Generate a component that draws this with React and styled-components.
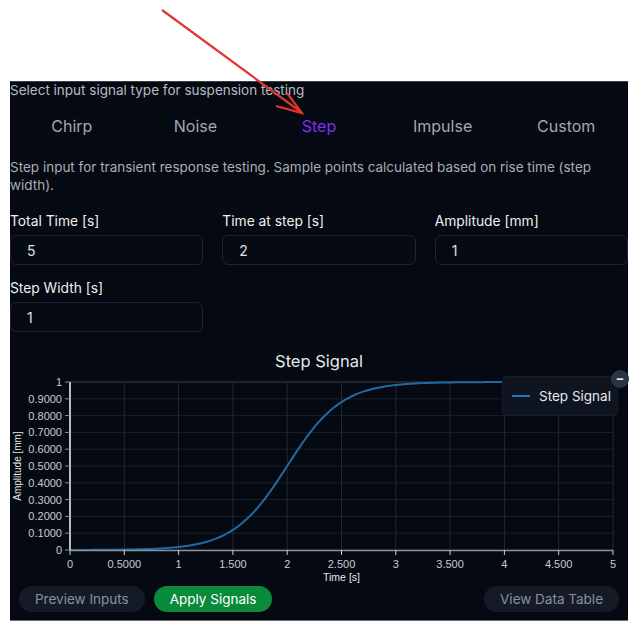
import React from 'react';
import styled, { createGlobalStyle } from 'styled-components';

const GlobalStyle = createGlobalStyle`
  html, body {
    margin: 0;
    padding: 0;
    background: #ffffff;
  }
  body {
    font-family: Inter, "Noto Sans", sans-serif;
  }
`;

const tabs = ['Chirp', 'Noise', 'Step', 'Impulse', 'Custom'];

const fields = [
  { label: 'Total Time [s]', value: '5' },
  { label: 'Time at step [s]', value: '2' },
  { label: 'Amplitude [mm]', value: '1' },
  { label: 'Step Width [s]', value: '1' },
];

// plot geometry (svg coords)
const PX0 = 60;
const PX1 = 603;
const PY0 = 34;
const PY1 = 202;
const sx = (t) => PX0 + (t / 5) * (PX1 - PX0);
const sy = (v) => PY1 - v * (PY1 - PY0);

const xTicks = [
  [0, '0'], [0.5, '0.5000'], [1, '1'], [1.5, '1.500'], [2, '2'], [2.5, '2.500'],
  [3, '3'], [3.5, '3.500'], [4, '4'], [4.5, '4.500'], [5, '5'],
];
const yTicks = [
  [0, '0'], [0.1, '0.1000'], [0.2, '0.2000'], [0.3, '0.3000'], [0.4, '0.4000'],
  [0.5, '0.5000'], [0.6, '0.6000'], [0.7, '0.7000'], [0.8, '0.8000'], [0.9, '0.9000'], [1, '1'],
];

const curvePath = (() => {
  const pts = [];
  for (let i = 0; i <= 200; i++) {
    const t = (i / 200) * 5;
    const v = 1 / (1 + Math.exp(-4 * (t - 2)));
    pts.push(`${i === 0 ? 'M' : 'L'}${sx(t).toFixed(2)},${sy(v).toFixed(2)}`);
  }
  return pts.join(' ');
})();

const App = () => {
  return (
    <>
      <GlobalStyle />
      <Page>
        <Arrow width="320" height="120" viewBox="0 0 320 120">
          <path d="M162 10 L301 112" stroke="#e3342f" strokeWidth="2.2" fill="none" />
          <path d="M276 106 L302 113 L287 93" stroke="#e3342f" strokeWidth="2.2" fill="none" strokeLinejoin="miter" />
        </Arrow>
        <Panel>
          <Intro>Select input signal type for suspension testing</Intro>
          <Tabs>
            {tabs.map((t) => (
              <Tab key={t} active={t === 'Step'}>{t}</Tab>
            ))}
          </Tabs>
          <Description>
            Step input for transient response testing. Sample points calculated based on rise time (step width).
          </Description>
          <FieldGrid>
            {fields.map((f) => (
              <Field key={f.label}>
                <Label>{f.label}</Label>
                <Input defaultValue={f.value} />
              </Field>
            ))}
          </FieldGrid>

          <ChartWrap>
            <svg width="618" height="236" viewBox="0 0 618 236">
              <text x="309" y="19" textAnchor="middle" fill="#e6e8eb" fontSize="16.5" fontFamily="Inter, sans-serif">
                Step Signal
              </text>
              {yTicks.map(([v]) => (
                <line key={'gy' + v} x1={PX0} x2={PX1} y1={sy(v)} y2={sy(v)}
                  stroke={v === 1 ? '#3a3f48' : '#1c212b'} strokeWidth="1" />
              ))}
              {xTicks.map(([t]) => (
                <line key={'gx' + t} x1={sx(t)} x2={sx(t)} y1={PY0} y2={PY1}
                  stroke="#232833" strokeWidth="1" />
              ))}
              <path d={curvePath} stroke="#1f6aa5" strokeWidth="2" fill="none" />
              <line x1={PX0} x2={PX1} y1={PY1 + 0.5} y2={PY1 + 0.5} stroke="#8c9099" strokeWidth="1.5" />
              <line x1={PX0} x2={PX0} y1={PY0} y2={PY1} stroke="#f2f2f2" strokeWidth="1.5" />
              {yTicks.map(([v, l]) => (
                <g key={'ty' + v}>
                  <line x1={PX0 - 5} x2={PX0} y1={sy(v)} y2={sy(v)} stroke="#8c9099" strokeWidth="1" />
                  <text x={PX0 - 8} y={sy(v) + 4} textAnchor="end" fill="#c9ccd1" fontSize="11"
                    fontFamily="'Liberation Sans', Arial, sans-serif">{l}</text>
                </g>
              ))}
              {xTicks.map(([t, l]) => (
                <g key={'tx' + t}>
                  <line x1={sx(t)} x2={sx(t)} y1={PY1} y2={PY1 + 5} stroke="#c9ccd1" strokeWidth="1" />
                  <text x={sx(t)} y={PY1 + 18} textAnchor="middle" fill="#c9ccd1" fontSize="11"
                    fontFamily="'Liberation Sans', Arial, sans-serif">{l}</text>
                </g>
              ))}
              <text x={(PX0 + PX1) / 2} y={PY1 + 31} textAnchor="middle" fill="#e6e8eb" fontSize="10.5"
                fontFamily="'Liberation Sans', Arial, sans-serif">Time [s]</text>
              <text transform={`translate(11 ${(PY0 + PY1) / 2}) rotate(-90)`} textAnchor="middle" fill="#e6e8eb"
                fontSize="10" fontFamily="'Liberation Sans', Arial, sans-serif">Amplitude [mm]</text>
            </svg>
            <Legend>
              <LegendLine />
              <span>Step Signal</span>
            </Legend>
            <Collapse>−</Collapse>
          </ChartWrap>

          <Actions>
            <Button>Preview Inputs</Button>
            <Button primary>Apply Signals</Button>
            <Spacer />
            <Button>View Data Table</Button>
          </Actions>
        </Panel>
      </Page>
    </>
  );
};

const Page = styled.div`
  position: relative;
  width: 638px;
  height: 631px;
  padding: 81px 10px 0 10px;
  box-sizing: border-box;
  background: #ffffff;
`;

const Arrow = styled.svg`
  position: absolute;
  left: 0;
  top: 0;
  z-index: 2;
  pointer-events: none;
`;

const Panel = styled.div`
  width: 618px;
  background: #050911;
  border-top: 1px solid #3b3f47;
  border-bottom: 1px solid #6c7078;
  padding-bottom: 8px;
  box-sizing: border-box;
  color: #b4b8bf;
`;

const Intro = styled.div`
  font-size: 13.5px;
  line-height: 17px;
  color: #b7bbc2;
`;

const Tabs = styled.div`
  display: grid;
  grid-template-columns: repeat(5, 1fr);
  height: 54px;
  align-items: center;
`;

const Tab = styled.div`
  text-align: center;
  font-size: 16px;
  color: ${(p) => (p.active ? '#7b2ff2' : '#a3a7ae')};
`;

const Description = styled.p`
  margin: 5px 0 0 0;
  font-size: 13.5px;
  line-height: 18px;
  color: #a9adb4;
`;

const FieldGrid = styled.div`
  display: grid;
  grid-template-columns: repeat(3, minmax(0, 1fr));
  column-gap: 19px;
  row-gap: 14px;
  margin-top: 18px;
`;

const Field = styled.div`
  display: flex;
  flex-direction: column;
  gap: 5px;
  min-width: 0;
`;

const Label = styled.label`
  font-size: 13.8px;
  line-height: 18px;
  color: #eef0f2;
`;

const Input = styled.input`
  width: 100%;
  min-width: 0;
  height: 30px;
  box-sizing: border-box;
  border: 1px solid #1d2330;
  border-radius: 6px;
  background: #060a13;
  color: #dfe1e5;
  font-family: Inter, sans-serif;
  font-size: 14px;
  padding: 0 16px;
  outline: none;
`;

const ChartWrap = styled.div`
  position: relative;
  margin-top: 16px;
  height: 236px;

  svg {
    display: block;
  }
`;

const Legend = styled.div`
  position: absolute;
  left: 492px;
  top: 28px;
  width: 116px;
  height: 40px;
  box-sizing: border-box;
  background: #0e1420;
  border: 1px solid #161c28;
  border-radius: 4px;
  display: flex;
  align-items: center;
  gap: 9px;
  padding-left: 9px;
  font-size: 13.5px;
  color: #e6e8eb;
`;

const LegendLine = styled.div`
  width: 18px;
  height: 2px;
  background: #1f78c1;
`;

const Collapse = styled.div`
  position: absolute;
  left: 601px;
  top: 22px;
  width: 18px;
  height: 18px;
  border-radius: 50%;
  background: #2b3443;
  color: #e8eaed;
  font-size: 13px;
  font-weight: 700;
  line-height: 17px;
  text-align: center;
`;

const Actions = styled.div`
  display: flex;
  align-items: center;
  gap: 9px;
  padding: 0 9px;
  margin-top: 2px;
`;

const Spacer = styled.div`
  flex: 1;
`;

const Button = styled.button`
  height: 26px;
  border: none;
  border-radius: 13px;
  padding: 0 16px;
  font-family: Inter, sans-serif;
  font-size: 13.5px;
  background: ${(p) => (p.primary ? '#0a8a3b' : '#151b26')};
  color: ${(p) => (p.primary ? '#ffffff' : '#8b9099')};
`;

export default App;
